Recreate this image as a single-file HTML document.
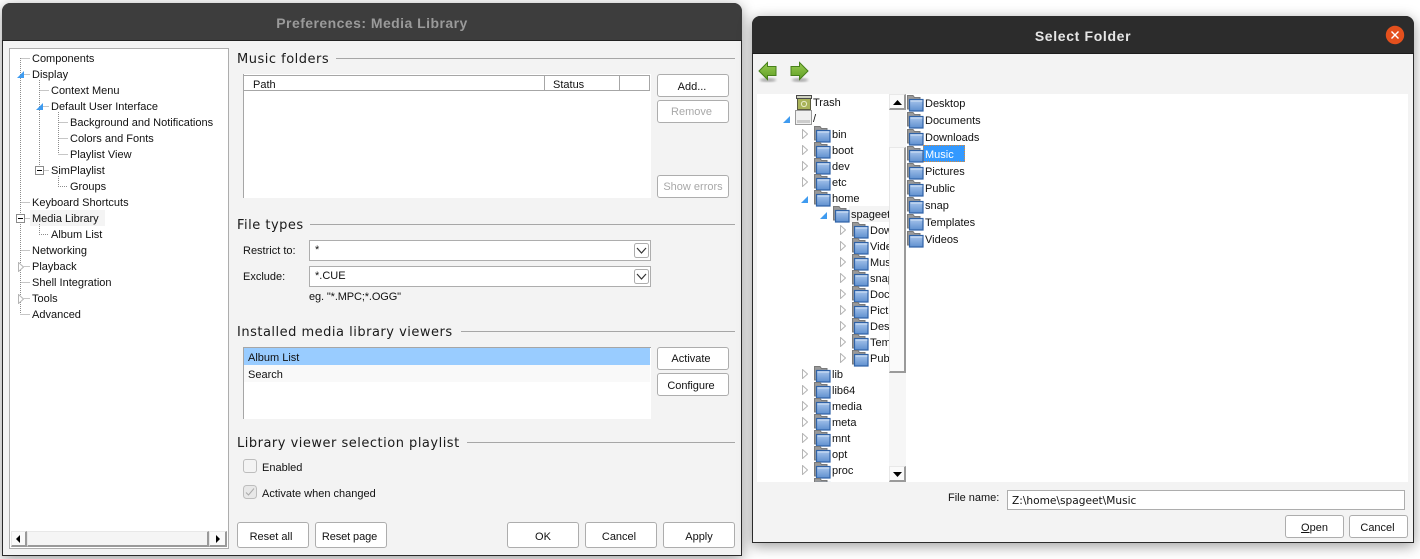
<!DOCTYPE html>
<html><head><meta charset="utf-8"><title>Preferences: Media Library</title>
<style>
html,body{margin:0;padding:0;width:1420px;height:559px;overflow:hidden;background:#fff}
body{position:relative;font:11px/16px "Liberation Sans",sans-serif;color:#111}
div,span,svg{position:absolute}
.t{white-space:nowrap;height:16px;margin-top:1px}
.win{background:#f3f3f3;box-sizing:border-box;border:1px solid #2a2a2a;border-radius:9px 9px 0 0;box-shadow:0 3px 14px rgba(0,0,0,.4)}
.tb{left:0;right:0;top:0;border-radius:8px 8px 0 0;text-align:center;font:bold 14px "Liberation Sans",sans-serif;letter-spacing:.45px}
.b{box-sizing:border-box;background:#fff;border:1px solid #adadad;border-radius:3px;text-align:center;white-space:nowrap}
.d{color:#a8a8a8}
.h{font:13px/16px "DejaVu Sans",sans-serif;white-space:nowrap;color:#1a1a1a;letter-spacing:.5px;left:237px;margin-top:1px}
.l{height:1px;background:#a6a6a6}
.w{background:#fff}
.sb{box-sizing:border-box;background:#fafafa;border:solid;border-width:1px 2px 2px 1px;border-color:#e8e8e8 #9a9a9a #9a9a9a #e8e8e8}
</style></head><body>
<svg width="0" height="0" style="left:0;top:0"><defs>
<linearGradient id="g" x1="0" y1="0" x2="0" y2="1"><stop offset="0" stop-color="#a9c6ec"/><stop offset="1" stop-color="#5f90cf"/></linearGradient>
<linearGradient id="ga" x1="0" y1="0" x2="0" y2="1"><stop offset="0" stop-color="#98cb52"/><stop offset="1" stop-color="#5f9e24"/></linearGradient>
<symbol id="f" viewBox="0 0 17 17"><path d="M.5 14V.5H6L7.5 2.5H13V5H3V14Z" fill="#999" stroke="#7a7a7a"/><rect x="2.5" y="4.5" width="13.5" height="11.5" fill="url(#g)" stroke="#2f62a6" stroke-width="1.2"/><path d="M3.5 6H15.5" stroke="#d6e4f6"/></symbol>
<symbol id="c" viewBox="0 0 6 10"><path d="M.5 .5L5.5 5L.5 9.5Z" fill="#fff" stroke="#b5b5b5"/></symbol>
<symbol id="e" viewBox="0 0 7 7"><path d="M7 0V7H0Z" fill="#3f9bf0"/></symbol>
</defs></svg>

<!-- LEFT WINDOW -->
<div class="win" style="left:2px;top:3px;width:740px;height:553px"></div>
<div class="tb" style="left:2px;right:auto;top:3px;width:740px;height:38px;background:#3d3d3d;color:#9a9a9a;line-height:41px;box-sizing:border-box;border-bottom:1px solid #222">Preferences: Media Library</div>

<!-- tree -->
<div class="w" style="left:9px;top:48px;width:220px;height:501px;box-sizing:border-box;border:1px solid #adadad"></div>
<div style="left:30px;top:210px;width:75px;height:16px;background:#f4f4f4"></div>
<svg width="228" height="330" style="left:0;top:0;overflow:visible" fill="none" stroke="#8c8c8c" stroke-dasharray="1 1">
<path d="M20.5 58V314M20.5 58.5H30M20.5 74.5H30M20.5 202.5H30M20.5 218.5H30M20.5 250.5H30M20.5 266.5H30M20.5 282.5H30M20.5 298.5H30M20.5 314.5H30"/>
<path d="M39.5 80V170M39.5 90.5H49M39.5 106.5H49M39.5 170.5H49M39.5 224V234.5H49"/>
<path d="M58.5 112V154M58.5 122.5H68M58.5 138.5H68M58.5 154.5H68M58.5 176V186.5H68"/>
</svg>
<svg width="7" height="7" style="left:17px;top:71px"><use href="#e"/></svg>
<svg width="7" height="7" style="left:36px;top:103px"><use href="#e"/></svg>
<svg width="6" height="10" style="left:18px;top:262px"><use href="#c"/></svg>
<svg width="6" height="10" style="left:18px;top:294px"><use href="#c"/></svg>
<svg width="10" height="10" style="left:35px;top:166px"><rect x=".5" y=".5" width="8" height="8" fill="#fff" stroke="#8c8c8c"/><path d="M2 4.5H7" stroke="#000"/></svg>
<svg width="10" height="10" style="left:16px;top:214px"><rect x=".5" y=".5" width="8" height="8" fill="#fff" stroke="#8c8c8c"/><path d="M2 4.5H7" stroke="#000"/></svg>
<span class="t" style="left:32px;top:50px">Components</span>
<span class="t" style="left:32px;top:66px">Display</span>
<span class="t" style="left:51px;top:82px">Context Menu</span>
<span class="t" style="left:51px;top:98px">Default User Interface</span>
<span class="t" style="left:70px;top:114px">Background and Notifications</span>
<span class="t" style="left:70px;top:130px">Colors and Fonts</span>
<span class="t" style="left:70px;top:146px">Playlist View</span>
<span class="t" style="left:51px;top:162px">SimPlaylist</span>
<span class="t" style="left:70px;top:178px">Groups</span>
<span class="t" style="left:32px;top:194px">Keyboard Shortcuts</span>
<span class="t" style="left:32px;top:210px">Media Library</span>
<span class="t" style="left:51px;top:226px">Album List</span>
<span class="t" style="left:32px;top:242px">Networking</span>
<span class="t" style="left:32px;top:258px">Playback</span>
<span class="t" style="left:32px;top:274px">Shell Integration</span>
<span class="t" style="left:32px;top:290px">Tools</span>
<span class="t" style="left:32px;top:306px">Advanced</span>
<!-- tree scrollbar -->
<div style="left:11px;top:531px;width:216px;height:16px;background:#f3f3f3;border-top:1px solid #ddd;border-bottom:1px solid #a0a0a0;box-sizing:border-box"></div>
<div class="sb" style="left:11px;top:531px;width:16px;height:16px"></div>
<div class="sb" style="left:27px;top:531px;width:182px;height:16px;background:#f5f5f5"></div>
<div class="sb" style="left:209px;top:531px;width:18px;height:16px"></div>
<svg width="5" height="8" style="left:16px;top:535px"><path d="M4 0V8L0 4Z"/></svg>
<svg width="5" height="8" style="left:216px;top:535px"><path d="M0 0V8L4 4Z"/></svg>

<!-- Music folders -->
<span class="h" style="top:51px">Music folders</span>
<div class="l" style="left:336px;top:58px;width:399px"></div>
<div class="w" style="left:243px;top:74px;width:408px;height:124px;box-sizing:border-box;border-left:1px solid #a6a6a6"></div>
<div class="w" style="left:243px;top:75px;width:407px;height:16px;box-sizing:border-box;border:1px solid #a6a6a6;border-width:1px 1px 1px 1px"></div>
<div style="left:544px;top:75px;width:1px;height:16px;background:#a6a6a6"></div>
<div style="left:619px;top:75px;width:1px;height:16px;background:#a6a6a6"></div>
<span class="t" style="left:253px;top:76px">Path</span>
<span class="t" style="left:553px;top:76px">Status</span>
<div class="b" style="left:657px;top:74px;width:72px;height:23px;line-height:24px;padding-right:2px">Add...</div>
<div class="b d" style="left:657px;top:100px;width:72px;height:23px;line-height:22px;padding-right:3px">Remove</div>
<div class="b d" style="left:657px;top:175px;width:72px;height:23px;line-height:23px">Show errors</div>

<!-- File types -->
<span class="h" style="top:217px">File types</span>
<div class="l" style="left:310px;top:224px;width:425px"></div>
<span class="t" style="left:243px;top:242px">Restrict to:</span>
<span class="t" style="left:243px;top:268px">Exclude:</span>
<div class="w" style="left:309px;top:240px;width:342px;height:21px;box-sizing:border-box;border:1px solid #adadad"></div>
<div class="w" style="left:309px;top:266px;width:342px;height:21px;box-sizing:border-box;border:1px solid #adadad"></div>
<span class="t" style="left:315px;top:241px">*</span>
<span class="t" style="left:315px;top:267px">*.CUE</span>
<svg width="15" height="15" style="left:634px;top:243px"><rect x=".5" y=".5" width="14" height="14" rx="2" fill="#fff" stroke="#adadad"/><path d="M3 5L7.5 10L12 5" fill="none" stroke="#333" stroke-width="1.2"/></svg>
<svg width="15" height="15" style="left:634px;top:269px"><rect x=".5" y=".5" width="14" height="14" rx="2" fill="#fff" stroke="#adadad"/><path d="M3 5L7.5 10L12 5" fill="none" stroke="#333" stroke-width="1.2"/></svg>
<span class="t" style="left:309px;top:288px;letter-spacing:-.12px">eg. "*.MPC;*.OGG"</span>

<!-- Viewers -->
<span class="h" style="top:324px">Installed media library viewers</span>
<div class="l" style="left:461px;top:331px;width:274px"></div>
<div class="w" style="left:243px;top:347px;width:408px;height:72px;box-sizing:border-box;border-left:1px solid #a6a6a6;border-top:1px solid #a6a6a6"></div>
<div style="left:244px;top:348px;width:406px;height:17px;background:#99ccff"></div>
<div style="left:244px;top:365px;width:406px;height:17px;background:#f9f9f9"></div>
<span class="t" style="left:248px;top:349px">Album List</span>
<span class="t" style="left:248px;top:366px">Search</span>
<div class="b" style="left:657px;top:347px;width:72px;height:23px;line-height:23px;padding-right:4px">Activate</div>
<div class="b" style="left:657px;top:373px;width:72px;height:23px;line-height:24px;padding-right:4px;letter-spacing:-.05px">Configure</div>

<!-- Playlist -->
<span class="h" style="top:435px">Library viewer selection playlist</span>
<div class="l" style="left:467px;top:442px;width:268px"></div>
<div style="left:243px;top:459px;width:14px;height:14px;box-sizing:border-box;background:#f3f3f3;border:1px solid #bdbdbd;border-radius:3px"></div>
<span class="t" style="left:262px;top:459px">Enabled</span>
<svg width="14" height="14" style="left:243px;top:485px"><rect x=".5" y=".5" width="13" height="13" rx="3" fill="#e8e8e8" stroke="#bdbdbd"/><path d="M3 7.5L5.5 10L11 3.5" fill="none" stroke="#aaa"/></svg>
<span class="t" style="left:262px;top:485px">Activate when changed</span>

<div class="b" style="left:237px;top:522px;width:72px;height:26px;line-height:28px;padding-right:4px">Reset all</div>
<div class="b" style="left:315px;top:522px;width:72px;height:26px;line-height:28px;padding-right:3px;letter-spacing:-.1px">Reset page</div>
<div class="b" style="left:507px;top:522px;width:72px;height:26px;line-height:28px">OK</div>
<div class="b" style="left:585px;top:522px;width:72px;height:26px;line-height:28px;padding-right:4px">Cancel</div>
<div class="b" style="left:663px;top:522px;width:72px;height:26px;line-height:28px">Apply</div>

<!-- RIGHT WINDOW -->
<div class="win" style="left:752px;top:16px;width:662px;height:527px"></div>
<div class="tb" style="left:752px;right:auto;top:16px;width:662px;height:38px;background:#2c2c2c;color:#e6e6e6;line-height:40px;box-sizing:border-box;border-bottom:1px solid #1c1c1c;font-size:14px;letter-spacing:.65px">Select Folder</div>
<svg width="20" height="20" style="left:1385px;top:25px"><circle cx="10" cy="10" r="9.2" fill="#e4501d"/><path d="M6.5 6.5L13.5 13.5M13.5 6.5L6.5 13.5" stroke="#fff" stroke-width="1.4"/></svg>
<svg width="60" height="24" style="left:757px;top:60px">
<defs><filter id="bl"><feGaussianBlur stdDeviation="1.2"/></filter></defs>
<ellipse cx="11" cy="20" rx="8" ry="2" fill="#aaa" filter="url(#bl)"/><ellipse cx="43" cy="20" rx="8" ry="2" fill="#aaa" filter="url(#bl)"/>
<path d="M2 11L10.5 2.5V6.5H19V15.5H10.5V19.5Z" fill="url(#ga)" stroke="#47801a"/>
<path d="M51 11L42.5 2.5V6.5H34V15.5H42.5V19.5Z" fill="url(#ga)" stroke="#47801a"/>
</svg>

<div class="w" style="left:757px;top:94px;width:651px;height:388px;overflow:hidden"></div>

<!-- left folder tree -->
<div class="w" style="left:757px;top:94px;width:132px;height:388px;overflow:hidden">
<div style="left:92px;top:112px;width:40px;height:16px;background:#f4f4f4"></div>
<svg width="16" height="16" style="left:39px;top:0"><rect x="1.5" y="4.5" width="13" height="11" fill="#a9b35a" stroke="#5a5a3e"/><rect x=".5" y="1.5" width="15" height="3" fill="#cfd2c0" stroke="#4a4a4a"/><circle cx="8" cy="10" r="2.6" fill="none" stroke="#e8ecc8"/></svg>
<svg width="17" height="16" style="left:38px;top:16px"><rect x=".5" y=".5" width="16" height="14" fill="#f0f0f0" stroke="#999"/><rect x="2" y="10" width="13" height="3" fill="#ccc"/></svg>
<span class="t" style="left:56px;top:0">Trash</span>
<span class="t" style="left:56px;top:16px">/</span>
<svg width="7" height="7" style="left:26px;top:22px"><use href="#e"/></svg>
<svg width="7" height="7" style="left:44px;top:102px"><use href="#e"/></svg>
<svg width="7" height="7" style="left:63px;top:118px"><use href="#e"/></svg>

<svg width="6" height="10" style="left:45px;top:35px"><use href="#c"/></svg><svg width="17" height="17" style="left:57px;top:32px"><use href="#f"/></svg><span class="t" style="left:75px;top:32px">bin</span>
<svg width="6" height="10" style="left:45px;top:51px"><use href="#c"/></svg><svg width="17" height="17" style="left:57px;top:48px"><use href="#f"/></svg><span class="t" style="left:75px;top:48px">boot</span>
<svg width="6" height="10" style="left:45px;top:67px"><use href="#c"/></svg><svg width="17" height="17" style="left:57px;top:64px"><use href="#f"/></svg><span class="t" style="left:75px;top:64px">dev</span>
<svg width="6" height="10" style="left:45px;top:83px"><use href="#c"/></svg><svg width="17" height="17" style="left:57px;top:80px"><use href="#f"/></svg><span class="t" style="left:75px;top:80px">etc</span>
<svg width="17" height="17" style="left:57px;top:96px"><use href="#f"/></svg><span class="t" style="left:75px;top:96px">home</span>
<svg width="17" height="17" style="left:76px;top:112px"><use href="#f"/></svg><span class="t" style="left:94px;top:112px">spageet</span>

<svg width="6" height="10" style="left:83px;top:131px"><use href="#c"/></svg><svg width="17" height="17" style="left:95px;top:128px"><use href="#f"/></svg><span class="t" style="left:113px;top:128px">Downloads</span>
<svg width="6" height="10" style="left:83px;top:147px"><use href="#c"/></svg><svg width="17" height="17" style="left:95px;top:144px"><use href="#f"/></svg><span class="t" style="left:113px;top:144px">Videos</span>
<svg width="6" height="10" style="left:83px;top:163px"><use href="#c"/></svg><svg width="17" height="17" style="left:95px;top:160px"><use href="#f"/></svg><span class="t" style="left:113px;top:160px">Music</span>
<svg width="6" height="10" style="left:83px;top:179px"><use href="#c"/></svg><svg width="17" height="17" style="left:95px;top:176px"><use href="#f"/></svg><span class="t" style="left:113px;top:176px">snap</span>
<svg width="6" height="10" style="left:83px;top:195px"><use href="#c"/></svg><svg width="17" height="17" style="left:95px;top:192px"><use href="#f"/></svg><span class="t" style="left:113px;top:192px">Documents</span>
<svg width="6" height="10" style="left:83px;top:211px"><use href="#c"/></svg><svg width="17" height="17" style="left:95px;top:208px"><use href="#f"/></svg><span class="t" style="left:113px;top:208px">Pictures</span>
<svg width="6" height="10" style="left:83px;top:227px"><use href="#c"/></svg><svg width="17" height="17" style="left:95px;top:224px"><use href="#f"/></svg><span class="t" style="left:113px;top:224px">Desktop</span>
<svg width="6" height="10" style="left:83px;top:243px"><use href="#c"/></svg><svg width="17" height="17" style="left:95px;top:240px"><use href="#f"/></svg><span class="t" style="left:113px;top:240px">Templates</span>
<svg width="6" height="10" style="left:83px;top:259px"><use href="#c"/></svg><svg width="17" height="17" style="left:95px;top:256px"><use href="#f"/></svg><span class="t" style="left:113px;top:256px">Public</span>

<svg width="6" height="10" style="left:45px;top:275px"><use href="#c"/></svg><svg width="17" height="17" style="left:57px;top:272px"><use href="#f"/></svg><span class="t" style="left:75px;top:272px">lib</span>
<svg width="6" height="10" style="left:45px;top:291px"><use href="#c"/></svg><svg width="17" height="17" style="left:57px;top:288px"><use href="#f"/></svg><span class="t" style="left:75px;top:288px">lib64</span>
<svg width="6" height="10" style="left:45px;top:307px"><use href="#c"/></svg><svg width="17" height="17" style="left:57px;top:304px"><use href="#f"/></svg><span class="t" style="left:75px;top:304px">media</span>
<svg width="6" height="10" style="left:45px;top:323px"><use href="#c"/></svg><svg width="17" height="17" style="left:57px;top:320px"><use href="#f"/></svg><span class="t" style="left:75px;top:320px">meta</span>
<svg width="6" height="10" style="left:45px;top:339px"><use href="#c"/></svg><svg width="17" height="17" style="left:57px;top:336px"><use href="#f"/></svg><span class="t" style="left:75px;top:336px">mnt</span>
<svg width="6" height="10" style="left:45px;top:355px"><use href="#c"/></svg><svg width="17" height="17" style="left:57px;top:352px"><use href="#f"/></svg><span class="t" style="left:75px;top:352px">opt</span>
<svg width="6" height="10" style="left:45px;top:371px"><use href="#c"/></svg><svg width="17" height="17" style="left:57px;top:368px"><use href="#f"/></svg><span class="t" style="left:75px;top:368px">proc</span>
<svg width="17" height="17" style="left:57px;top:384px"><use href="#f"/></svg>
</div>

<!-- tree scrollbar -->
<div style="left:889px;top:94px;width:17px;height:388px;background:#f6f6f6"></div>
<div class="sb" style="left:889px;top:94px;width:17px;height:16px"></div>
<svg width="9" height="5" style="left:893px;top:100px"><path d="M0 5H9L4.5 0Z"/></svg>
<div class="sb" style="left:889px;top:147px;width:17px;height:226px"></div>
<div class="sb" style="left:889px;top:466px;width:17px;height:16px"></div>
<svg width="9" height="5" style="left:893px;top:472px"><path d="M0 0H9L4.5 5Z"/></svg>

<!-- right list -->
<svg width="17" height="17" style="left:907px;top:95px"><use href="#f"/></svg><span class="t" style="left:925px;top:95px">Desktop</span>
<svg width="17" height="17" style="left:907px;top:112px"><use href="#f"/></svg><span class="t" style="left:925px;top:112px">Documents</span>
<svg width="17" height="17" style="left:907px;top:129px"><use href="#f"/></svg><span class="t" style="left:925px;top:129px">Downloads</span>
<div style="left:923px;top:145px;width:42px;height:17px;box-sizing:border-box;background:#3399ff;border:1px dotted #d98a3a"></div>
<svg width="17" height="17" style="left:907px;top:146px"><use href="#f"/></svg><span class="t" style="left:925px;top:146px;color:#fff">Music</span>
<svg width="17" height="17" style="left:907px;top:163px"><use href="#f"/></svg><span class="t" style="left:925px;top:163px">Pictures</span>
<svg width="17" height="17" style="left:907px;top:180px"><use href="#f"/></svg><span class="t" style="left:925px;top:180px">Public</span>
<svg width="17" height="17" style="left:907px;top:197px"><use href="#f"/></svg><span class="t" style="left:925px;top:197px">snap</span>
<svg width="17" height="17" style="left:907px;top:214px"><use href="#f"/></svg><span class="t" style="left:925px;top:214px">Templates</span>
<svg width="17" height="17" style="left:907px;top:231px"><use href="#f"/></svg><span class="t" style="left:925px;top:231px">Videos</span>

<!-- bottom -->
<span class="t" style="left:948px;top:489px">File name:</span>
<div class="w" style="left:1007px;top:490px;width:398px;height:20px;box-sizing:border-box;border:1px solid #adadad"></div>
<span class="t" style="left:1012px;top:492px;font-family:'DejaVu Sans',sans-serif;font-size:10.6px">Z:\home\spageet\Music</span>
<div class="b" style="left:1285px;top:515px;width:59px;height:23px;line-height:24px"><u>O</u>pen</div>
<div class="b" style="left:1349px;top:515px;width:59px;height:23px;line-height:24px;padding-right:2px">Cancel</div>
</body></html>
